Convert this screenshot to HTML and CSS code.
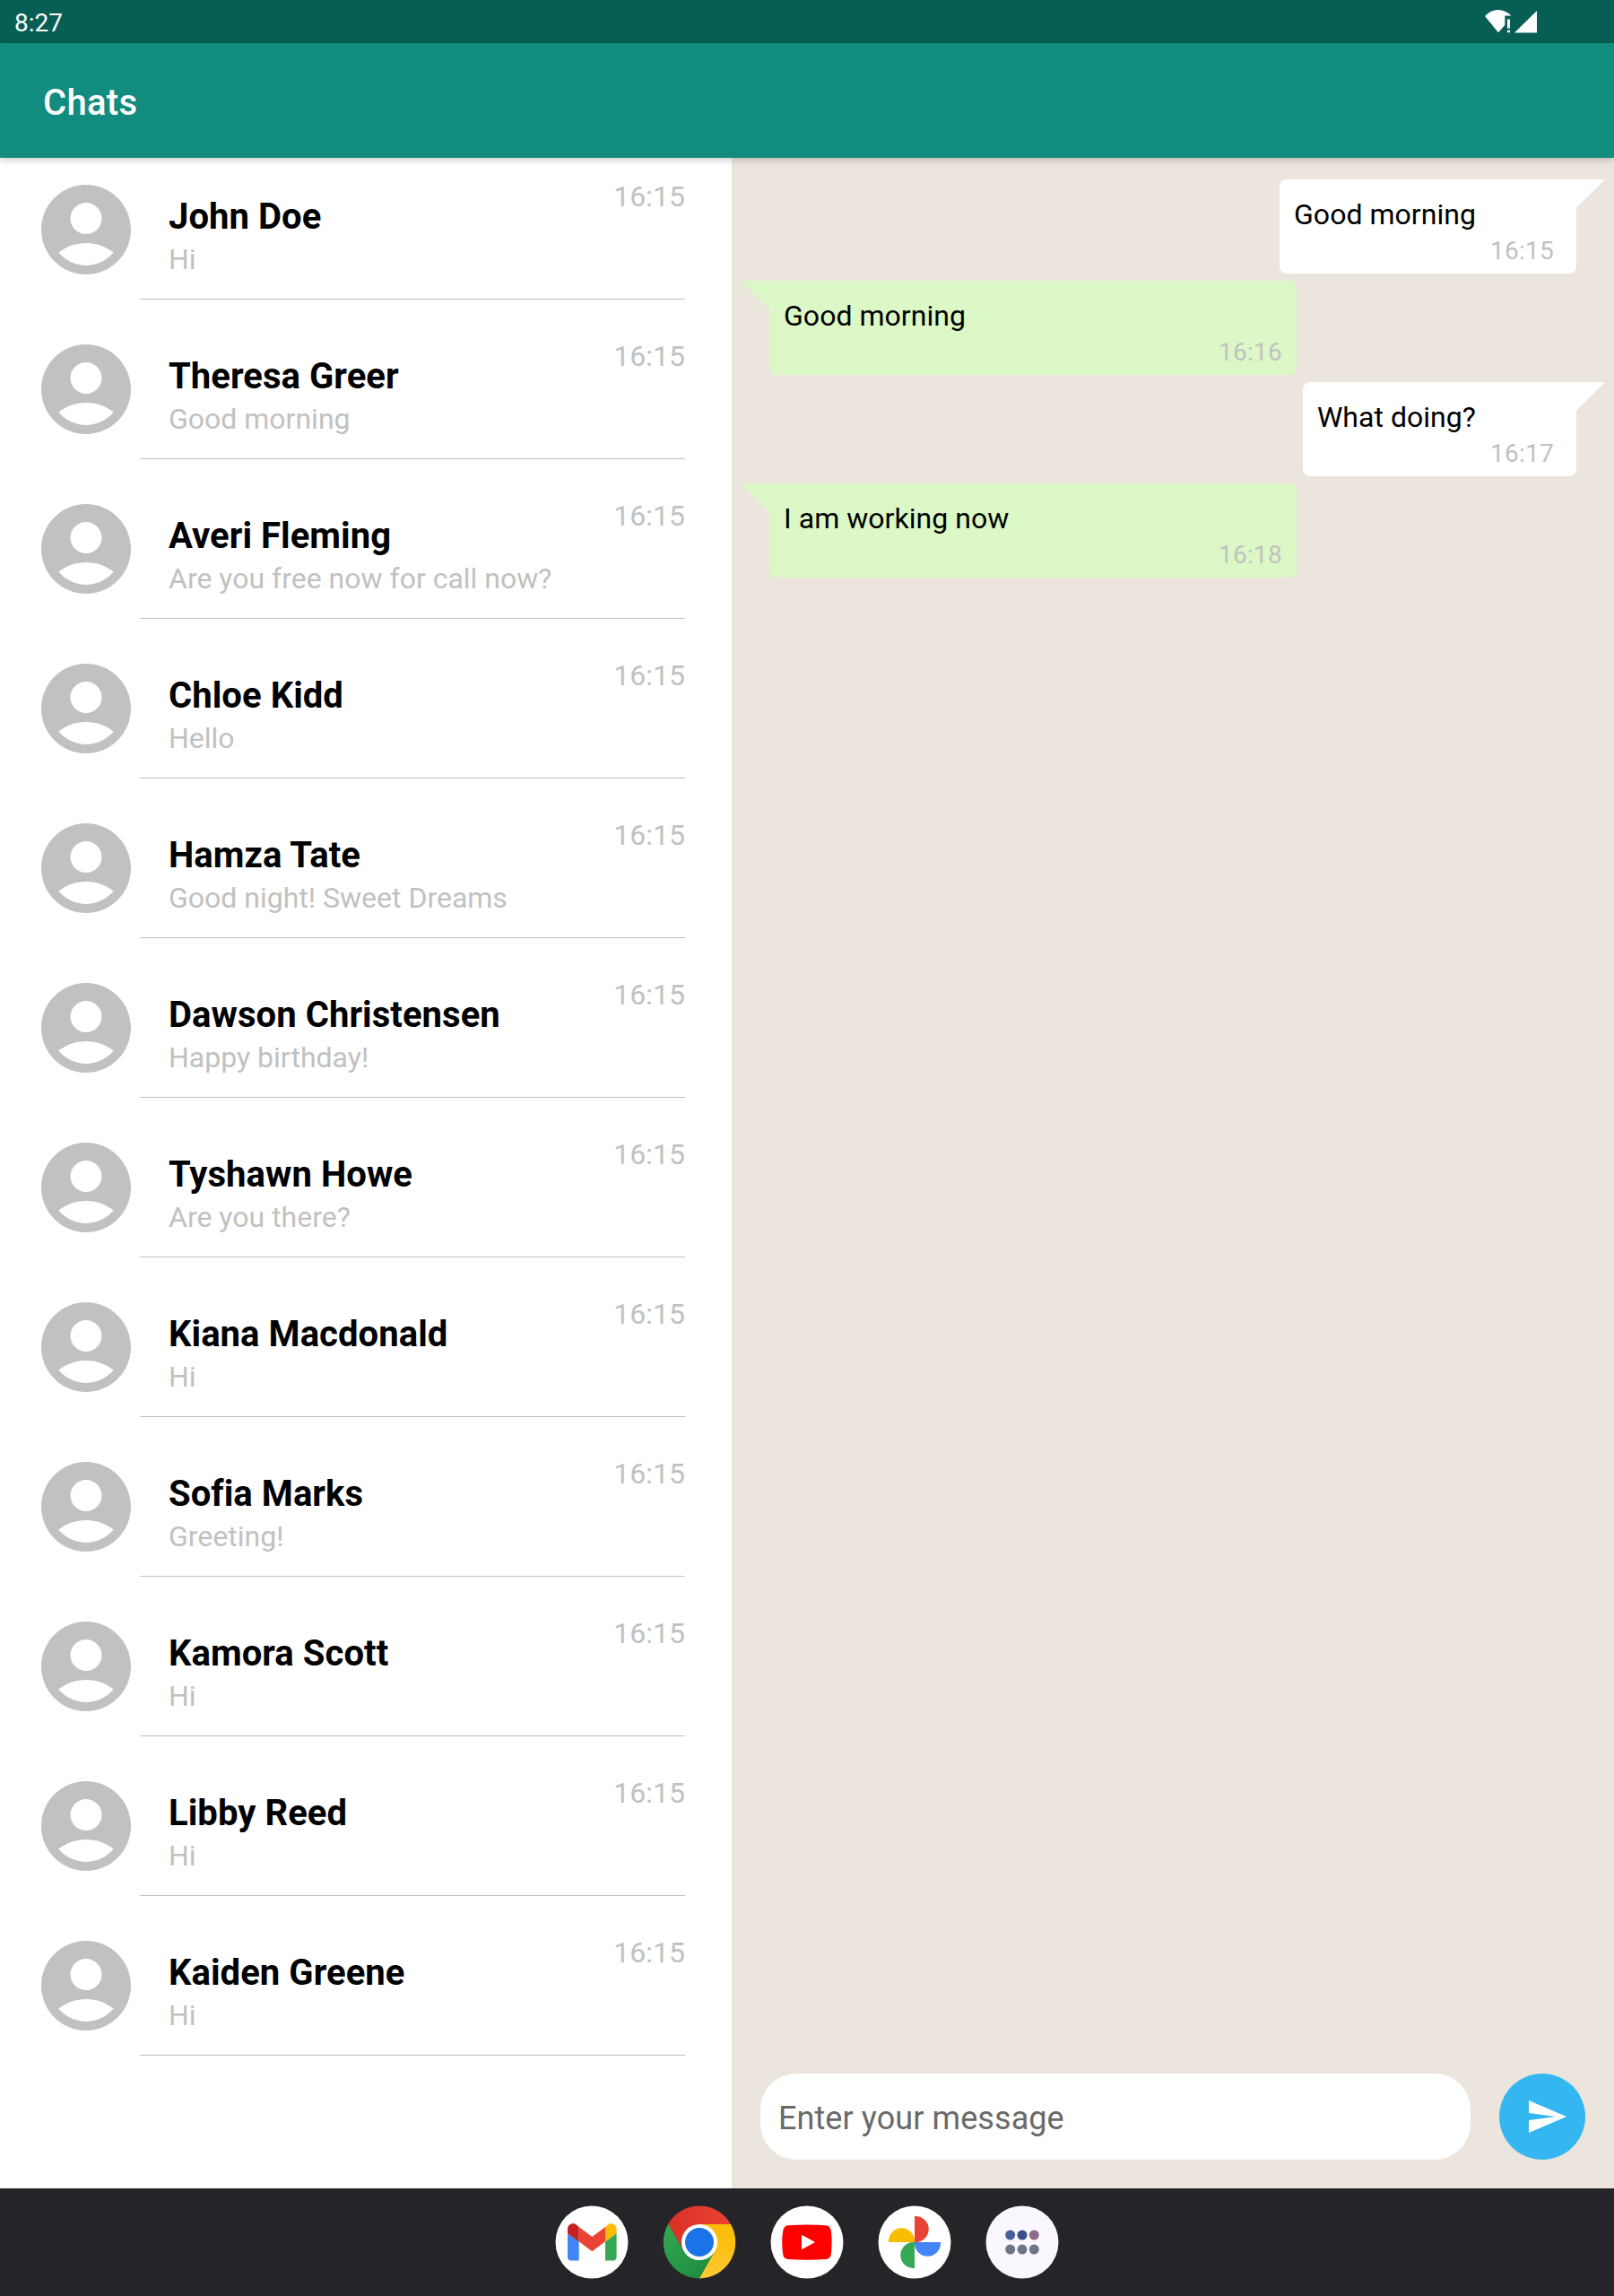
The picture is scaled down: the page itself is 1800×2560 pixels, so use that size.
FILE: index.html
```html
<!DOCTYPE html>
<html lang="en">
<head>
<meta charset="utf-8">
<title>Chats</title>
<link rel="stylesheet" href="styles.css">
</head>
<body>
<svg class="defs" aria-hidden="true">
  <symbol id="person" viewBox="0 0 24 24">
    <path d="M12 2C6.48 2 2 6.48 2 12s4.48 10 10 10 10-4.48 10-10S17.52 2 12 2zM12 6c1.93 0 3.5 1.57 3.5 3.5S13.93 13 12 13s-3.500-1.570-3.500-3.500S10.070 6 12 6zM12 20c-2.030 0-4.430-.820-6.140-2.880C7.550 15.800 9.680 15 12 15s4.450.800 6.140 2.120C16.430 19.180 14.030 20 12 20z"/>
  </symbol>
</svg>
<div class="screen">
  <header class="status-bar">
    <span class="clock">8:27</span>
    <svg class="signals" viewBox="1656 0 60 48" fill="#fff">
      <path d="M1656 18Q1662.500 11 1670.700 11Q1679 11 1685.500 17.600H1678.300V28L1671 36.300z"/>
      <path d="M1681 21.500h3v10h-3zM1681 33.800h3v2.500h-3z"/>
      <path d="M1689 36.600L1714 12V36.600z"/>
    </svg>
  </header>
  <div class="toolbar"><h1 class="title">Chats</h1></div>
  <main class="panes">
    <section class="chat-list">
      <article class="chat"><svg class="avatar"><use href="#person"/></svg><div class="info"><h2 class="name">John Doe</h2><p class="preview">Hi</p><time class="when">16:15</time></div></article>
      <article class="chat"><svg class="avatar"><use href="#person"/></svg><div class="info"><h2 class="name">Theresa Greer</h2><p class="preview">Good morning</p><time class="when">16:15</time></div></article>
      <article class="chat"><svg class="avatar"><use href="#person"/></svg><div class="info"><h2 class="name">Averi Fleming</h2><p class="preview">Are you free now for call now?</p><time class="when">16:15</time></div></article>
      <article class="chat"><svg class="avatar"><use href="#person"/></svg><div class="info"><h2 class="name">Chloe Kidd</h2><p class="preview">Hello</p><time class="when">16:15</time></div></article>
      <article class="chat"><svg class="avatar"><use href="#person"/></svg><div class="info"><h2 class="name">Hamza Tate</h2><p class="preview">Good night! Sweet Dreams</p><time class="when">16:15</time></div></article>
      <article class="chat"><svg class="avatar"><use href="#person"/></svg><div class="info"><h2 class="name">Dawson Christensen</h2><p class="preview">Happy birthday!</p><time class="when">16:15</time></div></article>
      <article class="chat"><svg class="avatar"><use href="#person"/></svg><div class="info"><h2 class="name">Tyshawn Howe</h2><p class="preview">Are you there?</p><time class="when">16:15</time></div></article>
      <article class="chat"><svg class="avatar"><use href="#person"/></svg><div class="info"><h2 class="name">Kiana Macdonald</h2><p class="preview">Hi</p><time class="when">16:15</time></div></article>
      <article class="chat"><svg class="avatar"><use href="#person"/></svg><div class="info"><h2 class="name">Sofia Marks</h2><p class="preview">Greeting!</p><time class="when">16:15</time></div></article>
      <article class="chat"><svg class="avatar"><use href="#person"/></svg><div class="info"><h2 class="name">Kamora Scott</h2><p class="preview">Hi</p><time class="when">16:15</time></div></article>
      <article class="chat"><svg class="avatar"><use href="#person"/></svg><div class="info"><h2 class="name">Libby Reed</h2><p class="preview">Hi</p><time class="when">16:15</time></div></article>
      <article class="chat"><svg class="avatar"><use href="#person"/></svg><div class="info"><h2 class="name">Kaiden Greene</h2><p class="preview">Hi</p><time class="when">16:15</time></div></article>
    </section>
    <section class="conversation">
      <div class="messages">
        <div class="bubble sent"><p class="text">Good morning</p><time class="stamp">16:15</time></div>
        <div class="bubble received"><p class="text">Good morning</p><time class="stamp">16:16</time></div>
        <div class="bubble sent"><p class="text">What doing?</p><time class="stamp">16:17</time></div>
        <div class="bubble received"><p class="text">I am working now</p><time class="stamp">16:18</time></div>
      </div>
      <div class="composer">
        <div class="field">Enter your message</div>
        <button class="send" aria-label="Send">
          <svg class="plane" viewBox="0 0 24 24" fill="#fff"><path d="M2.010 21L23 12 2.010 3 2 10l15 2-15 2z"/></svg>
        </button>
      </div>
    </section>
  </main>
  <nav class="dock">
    <svg class="app" viewBox="-40 -40 80 80">
      <circle r="40.500" fill="#fff"/>
      <path fill="#4285f4" d="M-27-10L-14.300-.700V20.400H-23a4 4 0 0 1-4-4z"/>
      <path fill="#34a853" d="M27.600-10L15-.700V20.400H23.600a4 4 0 0 0 4-4z"/>
      <path fill="#c5221f" d="M-27-9.700V-14.500C-27-20-21-22.500-17-19.200L-14.300-17V-.500z"/>
      <path fill="#fbbc04" d="M27.600-9.700V-14.500C27.600-20 21.600-22.500 17.600-19.200L15-17V-.500z"/>
      <path fill="#ea4335" d="M-14.300-17L.300-6 15-17V-.700L.300 10.300-14.300-.700z"/>
    </svg>
    <svg class="app" viewBox="-40 -40 80 80">
      <defs>
        <linearGradient id="red" x1="0" x2="1"><stop offset="0" stop-color="#d93025"/><stop offset="1" stop-color="#ea4335"/></linearGradient>
        <linearGradient id="green" x1="0" y1="0" x2=".7" y2="1"><stop offset="0" stop-color="#34a853"/><stop offset="1" stop-color="#1e8e3e"/></linearGradient>
        <linearGradient id="yellow" x1=".6" y1="0" x2=".4" y2="1"><stop offset="0" stop-color="#fbbc04"/><stop offset="1" stop-color="#fcc934"/></linearGradient>
      </defs>
      <path fill="url(#red)" d="M-35-20.200A40.400 40.400 0 0 1 35-20.200L0-19-17.300 10z"/>
      <path fill="url(#yellow)" d="M0-20H35A40.400 40.400 0 0 1 0 40.400L8 0z"/>
      <path fill="url(#green)" d="M-34.800-20.200A40.400 40.400 0 0 0 0 40.400L17.300 10H-17.300z"/>
      <circle r="20" fill="#fff"/>
      <circle r="16" fill="#1a73e8"/>
    </svg>
    <svg class="app" viewBox="-40 -40 80 80">
      <circle r="40.500" fill="#fff"/>
      <path fill="#f00" d="M-21-18.700Q0-20.300 21-18.700Q26-18.200 26.700-13Q28.500 0 26.700 14Q26 18.600 21 19Q0 20.600-21 19Q-26 18.600-26.700 14Q-28.900 0-26.700-13Q-26-18.200-21-18.700z"/>
      <path fill="#fff" d="M-6-8.200L9 0-6 8.200z"/>
    </svg>
    <svg class="app" viewBox="-40 -40 80 80">
      <circle r="40.500" fill="#fff"/>
      <path fill="#ea4335" d="M0 0V-29H1.200a14.500 14.500 0 0 1 0 29z"/>
      <path fill="#4285f4" d="M0 0H29V1.200a14.500 14.500 0 0 1-29 0z"/>
      <path fill="#34a853" d="M0 0V29H-1.200a14.500 14.500 0 0 1 0-29z"/>
      <path fill="#fbbc04" d="M0 0H-29V-1.200a14.500 14.500 0 0 1 29 0z"/>
    </svg>
    <svg class="app" viewBox="-40 -40 80 80">
      <circle r="40.500" fill="#faf8fe"/>
      <circle cx="-13.300" cy="-8" r="5.500" fill="#4a5f96"/>
      <circle cy="-8" r="5.500" fill="#3b5089"/>
      <circle cx="13.300" cy="-8" r="5.500" fill="#8e6b88"/>
      <g fill="#6d7588"><circle cx="-13.300" cy="8" r="5.500"/><circle cy="8" r="5.500"/><circle cx="13.300" cy="8" r="5.500"/></g>
    </svg>
  </nav>
</div>
</body>
</html>
```
FILE: styles.css
```css
* { box-sizing: border-box; margin: 0; padding: 0; }

body {
  font-family: Roboto, "Liberation Sans", sans-serif;
  font-weight: 400;
  color: #000;
}

.defs { display: none; }

.screen {
  display: flex;
  flex-direction: column;
  width: 1800px;
  height: 2560px;
}

.status-bar {
  display: flex;
  align-items: center;
  justify-content: space-between;
  height: 48px;
  padding: 0 84px 0 16px;
  background: #075e54;
  color: #fff;
}

.clock { font-size: 28px; line-height: 32px; padding-top: 3px; }

.signals { width: 60px; height: 48px; }

.toolbar {
  display: flex;
  align-items: center;
  height: 128px;
  padding-left: 48px;
  background: #128c7e;
  box-shadow: 0 2px 8px rgba(0, 0, 0, .22);
  z-index: 1;
}

.title {
  font-size: 40px;
  line-height: 48px;
  font-weight: 500;
  letter-spacing: .3px;
  padding-top: 6px;
  color: #fff;
}

.panes { display: flex; flex: 1; min-height: 0; }

.chat-list { width: 816px; background: #fff; }

.chat { display: flex; height: 178px; padding: 20px 52px 20px 36px; }

.avatar { width: 120px; height: 120px; flex: none; fill: #c1c1c1; }

.info {
  display: grid;
  grid-template-columns: 1fr auto;
  grid-template-rows: 74px 38px;
  flex: 1;
  height: 138px;
  padding-left: 32px;
  border-bottom: 1px solid #c1c1c1;
}

.name { grid-area: 1 / 1; padding-top: 22px; font-size: 40px; line-height: 48px; font-weight: 700; letter-spacing: .06px; }
.preview { grid-area: 2 / 1 / 3 / 3; font-size: 32px; line-height: 38px; color: #c1c1c1; }
.when { grid-area: 1 / 2; padding-top: 4px; font-size: 32px; line-height: 38px; color: #c1c1c1; }

.conversation {
  display: flex;
  flex: 1;
  flex-direction: column;
  justify-content: space-between;
  padding: 24px 32px 32px 10px;
  background: #ece5dd;
}

.messages {
  display: flex;
  flex-direction: column;
  gap: 8px;
}

.bubble {
  position: relative;
  display: flex;
  justify-content: space-between;
  gap: 16px;
  height: 105px;
  padding: 20px 16px 9px;
  border-radius: 8px;
}

.bubble::before {
  content: "";
  position: absolute;
  top: 0;
  width: 40px;
  height: 40px;
}

.sent {
  align-self: flex-end;
  margin-right: 10px;
  padding-right: 25px;
  background: #fff;
}

.sent::before {
  right: -32px;
  background: #fff;
  clip-path: polygon(0 0, 100% 0, 0 100%);
}

.received {
  width: 588px;
  margin-left: 32px;
  background: #dcf8c6;
}

.received::before {
  left: -32px;
  background: #dcf8c6;
  clip-path: polygon(0 0, 100% 0, 100% 100%);
}

.text { font-size: 32px; line-height: 38px; letter-spacing: .04px; }
.stamp { align-self: flex-end; font-size: 28px; line-height: 32px; letter-spacing: .25px; color: #c1c1c1; }

.composer {
  display: flex;
  justify-content: space-between;
  gap: 32px;
  padding-left: 22px;
}

.field {
  flex: 1;
  height: 96px;
  padding: 2px 20px 0;
  border-radius: 40px;
  background: #fff;
  font-size: 36px;
  line-height: 96px;
  letter-spacing: .08px;
  color: #696969;
}

.send {
  display: grid;
  place-items: center;
  width: 96px;
  height: 96px;
  padding-left: 10px;
  border: 0;
  border-radius: 50%;
  background: #34b7f1;
}

.plane { width: 48px; height: 48px; }

.dock {
  display: flex;
  align-items: center;
  justify-content: center;
  gap: 40px;
  height: 120px;
  background: #252429;
}

.app { width: 80px; height: 80px; overflow: visible; }
```
